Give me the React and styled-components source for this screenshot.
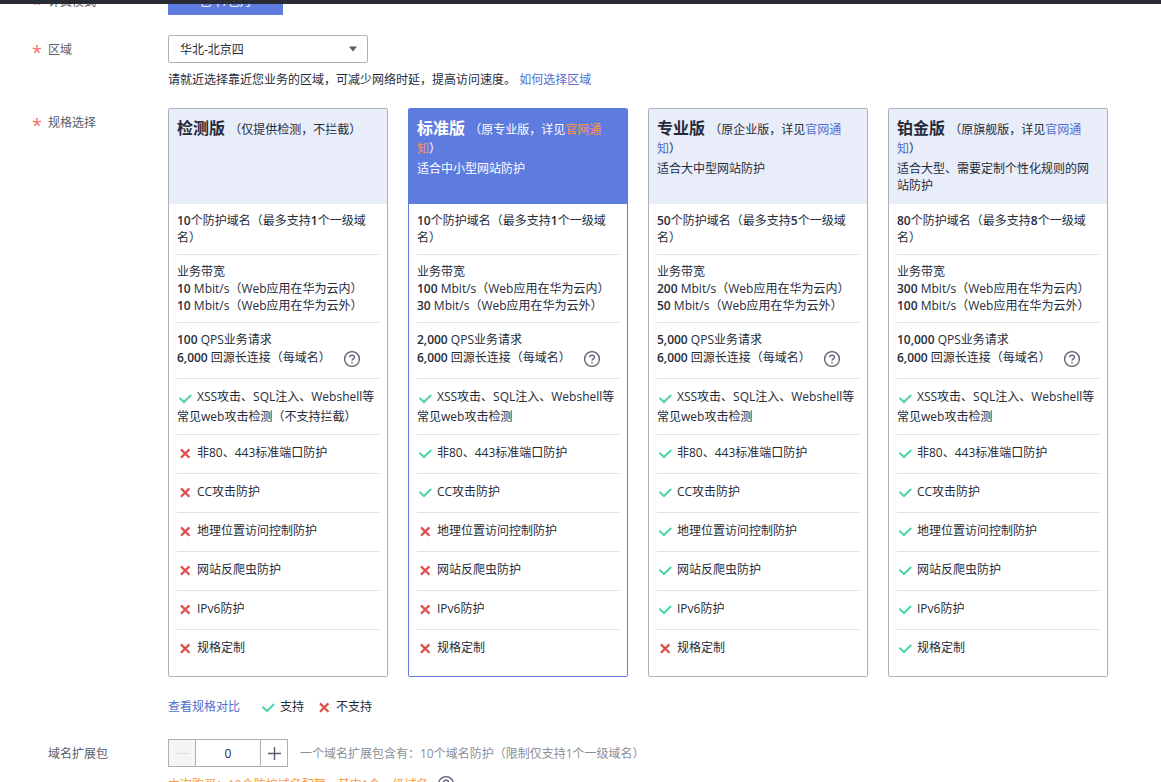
import React, { useState } from "react";
import styled, { createGlobalStyle } from "styled-components";

const plans = [
  {
    name: "检测版",
    note: "（仅提供检测，不拦截）",
    domains: "10",
    topDomains: "1",
    inside: "10",
    outside: "10",
    qps: "100",
    attack: "常见web攻击检测（不支持拦截）",
    supported: [false, false, false, false, false, false],
  },
  {
    name: "标准版",
    oldName: "原专业版",
    desc: "适合中小型网站防护",
    domains: "10",
    topDomains: "1",
    inside: "100",
    outside: "30",
    qps: "2,000",
    attack: "常见web攻击检测",
    supported: [true, true, false, false, false, false],
  },
  {
    name: "专业版",
    oldName: "原企业版",
    desc: "适合大中型网站防护",
    domains: "50",
    topDomains: "5",
    inside: "200",
    outside: "50",
    qps: "5,000",
    attack: "常见web攻击检测",
    supported: [true, true, true, true, true, false],
  },
  {
    name: "铂金版",
    oldName: "原旗舰版",
    desc: "适合大型、需要定制个性化规则的网站防护",
    domains: "80",
    topDomains: "8",
    inside: "300",
    outside: "100",
    qps: "10,000",
    attack: "常见web攻击检测",
    supported: [true, true, true, true, true, true],
  },
];

const features = [
  "非80、443标准端口防护",
  "CC攻击防护",
  "地理位置访问控制防护",
  "网站反爬虫防护",
  "IPv6防护",
  "规格定制",
];

function CheckIcon() {
  return (
    <Mark viewBox="0 0 16 12" aria-label="支持">
      <path d="M2.4 5.8 L7 10 L14.2 3" stroke="#50d4ab" strokeWidth="2.1" />
    </Mark>
  );
}

function CrossIcon() {
  return (
    <Mark viewBox="0 0 16 12" aria-label="不支持">
      <path d="M4 2.4 L12.4 10.8 M12.4 2.4 L4 10.8" stroke="#de504e" strokeWidth="2.3" />
    </Mark>
  );
}

function HelpIcon() {
  return (
    <Help viewBox="0 0 18 18">
      <circle cx="9" cy="9" r="7.4" />
      <path d="M6.7 7.3 C6.7 4.4 11.4 4.4 11.4 7.2 C11.4 8.9 9 8.9 9 10.8" />
      <path d="M9 12 V13.4" />
    </Help>
  );
}

function Plan({ plan, selected, onSelect }) {
  return (
    <Card $selected={selected} onClick={onSelect}>
      <CardHead $selected={selected}>
        <CardTitle>
          <strong>{plan.name}</strong>{" "}
          {plan.note || (
            <>
              （{plan.oldName}，详见<NoticeLink href="#notice" $selected={selected}>官网通知</NoticeLink>）
            </>
          )}
        </CardTitle>
        {plan.desc && <CardDesc>{plan.desc}</CardDesc>}
      </CardHead>
      <CardBody>
        <Cell>
          <b>{plan.domains}</b>个防护域名（最多支持<b>{plan.topDomains}</b>个一级域名）
        </Cell>
        <Cell>
          <p>业务带宽</p>
          <p><b>{plan.inside}</b> Mbit/s（Web应用在华为云内）</p>
          <p><b>{plan.outside}</b> Mbit/s（Web应用在华为云外）</p>
        </Cell>
        <Cell>
          <p><b>{plan.qps}</b> QPS业务请求</p>
          <HelpLine>
            <span><b>6,000</b> 回源长连接（每域名）</span>
            <HelpIcon />
          </HelpLine>
        </Cell>
        <AttackCell>
          <CheckIcon />XSS攻击、SQL注入、Webshell等{plan.attack}
        </AttackCell>
        {features.map((feature, index) => (
          <FeatureCell key={feature}>
            {plan.supported[index] ? <CheckIcon /> : <CrossIcon />}
            {feature}
          </FeatureCell>
        ))}
      </CardBody>
    </Card>
  );
}

function App() {
  const [selected, setSelected] = useState(1);
  const [count, setCount] = useState(0);

  return (
    <Page>
      <GlobalStyle />
      <TopBar />
      <Form>
        <Row>
          <Label as="span" $required>计费模式</Label>
          <ModeButton type="button">包年/包月</ModeButton>
        </Row>
        <Row>
          <Label htmlFor="region" $required>区域</Label>
          <div>
            <SelectBox>
              <select id="region" defaultValue="bj4">
                <option value="bj4">华北-北京四</option>
              </select>
              <svg viewBox="0 0 10 6"><path d="M1 0.5 H9 L5 5.5 Z" fill="#575d6c" /></svg>
            </SelectBox>
            <Hint>
              请就近选择靠近您业务的区域，可减少网络时延，提高访问速度。 <Link href="#region">如何选择区域</Link>
            </Hint>
          </div>
        </Row>
        <Row>
          <Label as="span" $required>规格选择</Label>
          <div>
            <Cards>
              {plans.map((plan, index) => (
                <Plan
                  key={plan.name}
                  plan={plan}
                  selected={index === selected}
                  onSelect={() => setSelected(index)}
                />
              ))}
            </Cards>
            <Legend>
              <Link href="#compare">查看规格对比</Link>
              <LegendItem><CheckIcon />支持</LegendItem>
              <LegendItem><CrossIcon />不支持</LegendItem>
            </Legend>
          </div>
        </Row>
        <Row>
          <Label htmlFor="domain-pack">域名扩展包</Label>
          <div>
            <PackLine>
              <Stepper>
                <button type="button" aria-label="减少" disabled={count === 0} onClick={() => setCount(count - 1)}>
                  <svg viewBox="0 0 13 13"><path d="M0 6.5 H13" /></svg>
                </button>
                <input
                  id="domain-pack"
                  type="text"
                  value={count}
                  onChange={(e) => setCount(Number(e.target.value) || 0)}
                />
                <button type="button" aria-label="增加" onClick={() => setCount(count + 1)}>
                  <svg viewBox="0 0 13 13"><path d="M0 6.5 H13 M6.5 0 V13" /></svg>
                </button>
              </Stepper>
              <PackNote>一个域名扩展包含有：10个域名防护（限制仅支持1个一级域名）</PackNote>
            </PackLine>
            <Quota>
              本次购买：10个防护域名配额，其中1个一级域名
              <HelpIcon />
            </Quota>
          </div>
        </Row>
      </Form>
    </Page>
  );
}

const GlobalStyle = createGlobalStyle`
  * {
    box-sizing: border-box;
  }
  body {
    margin: 0;
    background: #fff;
    color: #252b3a;
    font-family: "Open Sans", "Noto Sans CJK SC", sans-serif;
    font-size: 12px;
    line-height: 17px;
    text-spacing-trim: space-all;
  }
  p {
    margin: 0;
  }
  button, input, select {
    font: inherit;
    color: inherit;
  }
`;

const Page = styled.div`
  height: 100vh;
  overflow: hidden;
`;

const TopBar = styled.div`
  position: fixed;
  top: 0;
  left: 0;
  right: 0;
  height: 4px;
  background: #282b33;
  z-index: 1;
`;

/* the form is scrolled, its first row is half under the top bar */
const Form = styled.form`
  display: flex;
  flex-direction: column;
  gap: 20px;
  margin-top: -13px;
  padding: 0 53px 0 32px;
`;

const Row = styled.div`
  display: grid;
  grid-template-columns: 136px minmax(0, 1fr);
  align-items: start;
`;

const Label = styled.label`
  display: flex;
  align-items: center;
  height: 28px;
  padding-left: 16px;
  color: #575d6c;
  ${({ $required }) => $required && `
    padding-left: 0;
    &::before {
      content: "*";
      width: 16px;
      color: #f66f6a;
      font-size: 18px;
      line-height: 28px;
      padding-top: 6px;
    }
  `}
`;

const ModeButton = styled.button`
  width: 115px;
  height: 28px;
  border: 0;
  background: #5e7ce0;
  color: #fff;
`;

const SelectBox = styled.div`
  display: grid;
  align-items: center;
  width: 200px;
  select, svg {
    grid-area: 1 / 1;
  }
  select {
    appearance: none;
    width: 100%;
    height: 28px;
    padding: 0 28px 0 11px;
    border: 1px solid #adb0b8;
    border-radius: 2px;
    background: #fff;
  }
  svg {
    justify-self: end;
    width: 10px;
    height: 6px;
    margin-right: 10px;
    pointer-events: none;
  }
`;

const Link = styled.a`
  color: #526ecc;
  text-decoration: none;
`;

const Hint = styled.p`
  margin-top: 8px;
`;

const Cards = styled.div`
  display: grid;
  grid-template-columns: repeat(4, minmax(0, 1fr));
  gap: 20px;
`;

const Card = styled.section`
  border: 1px solid ${({ $selected }) => ($selected ? "#5e7ce0" : "#adb0b8")};
  border-radius: 2px;
  cursor: pointer;
`;

const CardHead = styled.header`
  min-height: 95px;
  padding: 10px 8px 8px;
  background: ${({ $selected }) => ($selected ? "#5e7ce0" : "#e9edfa")};
  color: ${({ $selected }) => ($selected ? "#fff" : "#252b3a")};
`;

const CardTitle = styled.p`
  line-height: 19px;
  strong {
    margin-right: 1px;
    font-size: 16px;
  }
`;

const NoticeLink = styled(Link)`
  color: ${({ $selected }) => ($selected ? "#fa9841" : "#526ecc")};
`;

const CardDesc = styled.p`
  margin-top: 2px;
`;

const CardBody = styled.div`
  padding: 0 8px 8px;
  b {
    font-weight: 600;
  }
`;

const Cell = styled.div`
  padding: 8px 0;
  border-bottom: 1px solid #dfe1e6;
  &:last-child {
    border-bottom: 0;
  }
`;

const HelpLine = styled.div`
  display: flex;
  align-items: flex-start;
  gap: 12px;
  height: 22px;
  line-height: 20px;
  svg {
    margin-top: 2px;
  }
`;

const AttackCell = styled(Cell)`
  padding: 8px 0 7px;
  line-height: 20px;
`;

const FeatureCell = styled(Cell)`
  display: flex;
  align-items: center;
  padding: 8px 0 10px;
  line-height: 20px;
`;

const Mark = styled.svg`
  width: 16px;
  height: 12px;
  margin-right: 4px;
  vertical-align: middle;
  fill: none;
`;

const Help = styled.svg`
  width: 18px;
  height: 18px;
  fill: none;
  stroke: #575d6c;
  stroke-width: 1.3;
`;

const Legend = styled.div`
  display: flex;
  align-items: center;
  margin-top: 20px;
  padding-bottom: 2px;
  line-height: 20px;
`;

const LegendItem = styled.span`
  display: flex;
  align-items: center;
  margin-left: 20px;
  & + & {
    margin-left: 12px;
  }
`;

const PackLine = styled.div`
  display: flex;
  align-items: center;
  gap: 12px;
`;

const Stepper = styled.div`
  display: flex;
  width: 120px;
  height: 28px;
  border: 1px solid #adb0b8;
  button {
    display: flex;
    align-items: center;
    justify-content: center;
    width: 26px;
    padding: 0;
    border: 0;
    background: #fff;
  }
  button:disabled {
    background: #f5f5f6;
  }
  svg {
    width: 13px;
    height: 13px;
    stroke: #575d6c;
    stroke-width: 1.4;
  }
  button:disabled svg {
    stroke: #dfe1e6;
  }
  input {
    flex: 1;
    min-width: 0;
    padding: 0;
    border: 0;
    border-left: 1px solid #adb0b8;
    border-right: 1px solid #adb0b8;
    text-align: center;
  }
`;

const PackNote = styled.span`
  color: #8a8e99;
`;

const Quota = styled.p`
  display: flex;
  align-items: center;
  gap: 8px;
  margin-top: 8px;
  color: #fa9841;
`;

export default App;
